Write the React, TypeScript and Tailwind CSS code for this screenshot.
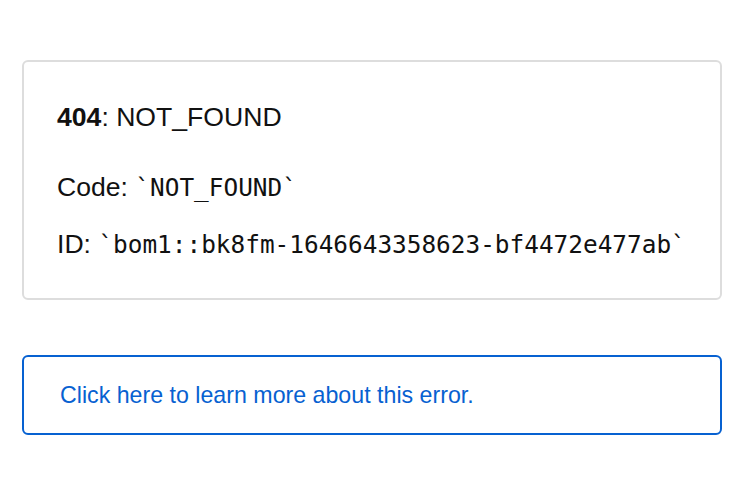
export default function App() {
  return (
    <main className="min-h-[481px] bg-white pl-[22px] pr-[28px] pt-[60px] font-['Liberation_Sans',Arial,sans-serif] text-[#111]">
      <div className="rounded-[6px] border-2 border-[#dddddd] pl-[33px] pr-6 pt-[40px] pb-[39px]">
        <p className="text-[26.6px] leading-[30px]">
          <strong>404</strong>: NOT_FOUND
        </p>
        <p className="mt-[40px] text-[26.6px] leading-[30px]">
          Code:{' '}
          <code className="font-['DejaVu_Sans_Mono',monospace] text-[24.4px] leading-none">`NOT_FOUND`</code>
        </p>
        <p className="mt-[27px] text-[26.6px] leading-[30px]">
          ID:{' '}
          <code className="font-['DejaVu_Sans_Mono',monospace] text-[24.4px] leading-none">
            `bom1::bk8fm-1646643358623-bf4472e477ab`
          </code>
        </p>
      </div>
      <a
        href="#"
        className="mt-[55px] block rounded-[6px] border-2 border-[#0761d1] py-[24px] pl-[36px] text-[23.2px] leading-[28px] text-[#0761d1]"
      >
        Click here to learn more about this error.
      </a>
    </main>
  )
}
